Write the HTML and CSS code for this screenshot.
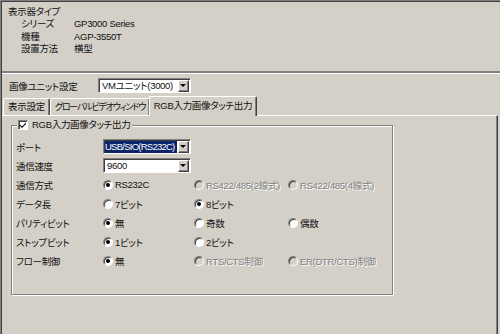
FILE: index.html
```html
<!DOCTYPE html>
<html lang="ja">
<head>
    <meta charset="UTF-8">
    <title>RGB入力画像タッチ出力</title>
    <link rel="stylesheet" href="styles.css">
</head>
<body>
    <div class="window">
        <div class="info">
            <div class="info-title">表示器タイプ</div>
            <div class="info-grid">
                <span>シリーズ</span><span>GP3000 Series</span>
                <span>機種</span><span>AGP-3550T</span>
                <span>設置方法</span><span>横型</span>
            </div>
        </div>
        <div class="sep"></div>

        <div class="unit-row">
            <span class="unit-label">画像ユニット設定</span>
            <div class="select unit-select">
                <span class="select-text">VMユニット(3000)</span>
                <span class="select-btn"><span class="arrow"></span></span>
            </div>
        </div>

        <div class="tabs">
            <div class="tab tab-1">表示設定</div>
            <div class="tab tab-2">グローバルビデオウィンドウ</div>
            <div class="tab active">RGB入力画像タッチ出力</div>
        </div>

        <div class="panel">
            <div class="group">
                <div class="legend">
                    <span class="check">
                        <svg width="8" height="8" viewBox="0 0 8 8"><path d="M1 3.5 L3 5.5 L7 1.5 L7 3 L3 7 L1 5 Z" fill="#000"/></svg>
                    </span>
                    RGB入力画像タッチ出力
                </div>
                <div class="form">
                    <span class="lbl">ポート</span>
                    <div class="select field-select">
                        <span class="select-text sel">USB/SIO(RS232C)</span>
                        <span class="select-btn"><span class="arrow"></span></span>
                    </div>
                    <span></span>

                    <span class="lbl">通信速度</span>
                    <div class="select field-select">
                        <span class="select-text">9600</span>
                        <span class="select-btn"><span class="arrow"></span></span>
                    </div>
                    <span></span>

                    <span class="lbl">通信方式</span>
                    <label class="opt"><span class="radio on"></span>RS232C</label>
                    <label class="opt dis"><span class="radio"></span>RS422/485(2線式)</label>
                    <label class="opt dis"><span class="radio"></span>RS422/485(4線式)</label>

                    <span class="lbl">データ長</span>
                    <label class="opt"><span class="radio"></span>7ビット</label>
                    <label class="opt"><span class="radio on"></span>8ビット</label>
                    <span></span>

                    <span class="lbl">パリティビット</span>
                    <label class="opt"><span class="radio on"></span>無</label>
                    <label class="opt"><span class="radio"></span>奇数</label>
                    <label class="opt"><span class="radio"></span>偶数</label>

                    <span class="lbl">ストップビット</span>
                    <label class="opt"><span class="radio on"></span>1ビット</label>
                    <label class="opt"><span class="radio"></span>2ビット</label>
                    <span></span>

                    <span class="lbl">フロー制御</span>
                    <label class="opt"><span class="radio on"></span>無</label>
                    <label class="opt dis"><span class="radio"></span>RTS/CTS制御</label>
                    <label class="opt dis"><span class="radio"></span>ER(DTR/CTS)制御</label>
                </div>
            </div>
        </div>
    </div>
</body>
</html>
```

FILE: styles.css
```css
*{
    margin: 0;
    padding: 0;
    box-sizing: border-box;
}
html, body{
    width: 500px;
    height: 334px;
    overflow: hidden;
}
body{
    background: #d4d0c8;
    font-family: "Liberation Sans", "Noto Sans CJK JP", sans-serif;
    font-size: 9.5px;
    letter-spacing: -0.3px;
    font-feature-settings: "palt";
    color: #111;
}
.window{
    height: 334px;
    border-top: 1px solid #808080;
    border-left: 1px solid #808080;
    box-shadow: inset 1px 1px 0 #404040;
    display: flex;
    flex-direction: column;
}

/* header */
.info{
    height: 70px;
    padding: 5px 0 0 7px;
    line-height: 12.3px;
}
.info-grid{
    display: grid;
    grid-template-columns: 53px auto;
    padding-left: 13px;
}
.sep{
    border-top: 2px solid #808080;
    border-bottom: 1px solid #fff;
    margin-left: 1px;
}

/* unit select */
.unit-row{
    display: flex;
    align-items: center;
    padding: 4px 0 0 8px;
}
.unit-label{
    width: 89px;
}
.unit-select{
    width: 93px;
}

.select{
    height: 15px;
    display: flex;
    background: #fff;
    border: 1px solid;
    border-color: #808080 #fff #fff #808080;
    box-shadow: inset 1px 1px 0 #404040;
    padding: 1px 1px 0 1px;
}
.select-text{
    flex: 1;
    line-height: 12px;
    padding-left: 2px;
    white-space: nowrap;
    overflow: hidden;
}
.select-text.sel{
    background: #0a246a;
    color: #fff;
    margin-right: 1px;
    padding-left: 0;
    letter-spacing: -0.75px;
}
.select-btn{
    width: 11px;
    height: 12px;
    background: #d4d0c8;
    border: 1px solid;
    border-color: #fff #404040 #404040 #fff;
    box-shadow: inset -1px -1px 0 #808080;
    display: flex;
    align-items: center;
    justify-content: center;
    flex-shrink: 0;
}
.arrow{
    width: 0;
    height: 0;
    border-left: 3px solid transparent;
    border-right: 3px solid transparent;
    border-top: 3px solid #000;
    margin: 0 1px 1px 0;
}

/* tabs */
.tabs{
    display: flex;
    align-items: flex-end;
    margin-top: 3px;
    padding-left: 2px;
    position: relative;
    z-index: 1;
}
.tab{
    height: 17px;
    line-height: 16px;
    text-align: center;
    border-top: 1px solid #fff;
    border-left: 1px solid #fff;
    border-right: 1px solid #404040;
    box-shadow: inset -1px 0 0 #808080;
    border-radius: 2px 2px 0 0;
    white-space: nowrap;
    overflow: hidden;
}
.tab-1{
    width: 47px;
}
.tab-2{
    width: 100px;
    font-size: 9px;
    letter-spacing: -1.2px;
}
.tab.active{
    width: 108px;
    height: 20px;
    line-height: 18px;
    margin: 0 0 -1px -1px;
    background: #d4d0c8;
}

/* panel */
.panel{
    flex: 1;
    border-top: 1px solid #fff;
    border-right: 1px solid #404040;
    box-shadow: inset -1px 0 0 #808080;
    margin: 0 2px 0 1px;
    padding: 9px 0 0 9px;
}
.group{
    position: relative;
    width: 382px;
    height: 170px;
    border: 1px solid #808080;
    box-shadow: 1px 1px 0 #fff, inset 1px 1px 0 #fff;
}
.legend{
    position: absolute;
    top: -7px;
    left: 5px;
    display: flex;
    align-items: center;
    gap: 4px;
    padding: 0 2px 0 1px;
    background: #d4d0c8;
    line-height: 12px;
}
.check{
    width: 10px;
    height: 10px;
    background: #fff;
    border: 1px solid;
    border-color: #808080 #fff #fff #808080;
    box-shadow: inset 1px 1px 0 #404040;
    display: flex;
    align-items: center;
    justify-content: center;
}

.form{
    display: grid;
    grid-template-columns: 87px 91px 94px auto;
    grid-auto-rows: 19px;
    align-items: center;
    padding: 11px 0 0 4px;
}
.field-select{
    grid-column: span 2;
    width: 88px;
}
.opt{
    display: flex;
    align-items: center;
    gap: 2px;
    white-space: nowrap;
}
.radio{
    width: 10px;
    height: 10px;
    border-radius: 50%;
    background: #fff;
    border: 1px solid;
    border-color: #808080 #fff #fff #808080;
    box-shadow: inset 1px 1px 0 #404040;
    position: relative;
    flex-shrink: 0;
}
.radio.on::after{
    content: "";
    position: absolute;
    left: 2px;
    top: 2px;
    width: 4px;
    height: 4px;
    border-radius: 50%;
    background: #000;
}
.opt.dis{
    color: #808080;
    text-shadow: 1px 1px 0 #fff;
}
.opt.dis .radio{
    background: #d4d0c8;
}
```
